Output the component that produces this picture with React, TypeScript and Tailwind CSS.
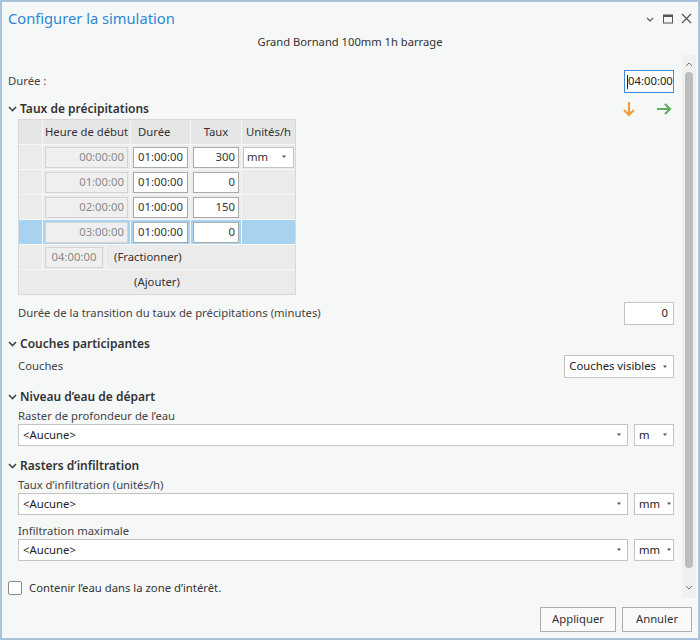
import { useState } from 'react';

const font = { fontFamily: '"Noto Sans", "Open Sans", sans-serif' };

const rows = [
  { start: '00:00:00', dur: '01:00:00', rate: '300', unit: true },
  { start: '01:00:00', dur: '01:00:00', rate: '0' },
  { start: '02:00:00', dur: '01:00:00', rate: '150' },
  { start: '03:00:00', dur: '01:00:00', rate: '0', selected: true },
];

function Caret({ className = '' }: { className?: string }) {
  return (
    <svg width="6" height="4" viewBox="0 0 6 4" className={`shrink-0 ${className}`}>
      <path d="M1 0.5h4L3 3z" fill="#555" />
    </svg>
  );
}

function Chevron() {
  return (
    <svg width="9" height="6" viewBox="0 0 9 6" className="shrink-0">
      <path d="M1 1l3.5 3.5L8 1" fill="none" stroke="#444" strokeWidth="1.6" />
    </svg>
  );
}

function SectionTitle({ children }: { children: React.ReactNode }) {
  return (
    <div className="flex items-center gap-[3px] h-[18px] text-[12px] font-semibold text-[#333] whitespace-nowrap">
      <Chevron />
      <span>{children}</span>
    </div>
  );
}

function Select({ value, className = '' }: { value: string; className?: string }) {
  return (
    <div className={`flex items-center justify-between gap-[6px] h-[22px] pl-[4px] pr-[5px] bg-white border border-[#c4c4c4] text-[#222] whitespace-nowrap ${className}`}>
      <span>{value}</span>
      <Caret />
    </div>
  );
}

function RasterRow({ unit }: { unit: string }) {
  return (
    <div className="flex gap-[6px]">
      <Select value="<Aucune>" className="flex-1" />
      <Select value={unit} className="w-[40px]" />
    </div>
  );
}

function RainTable() {
  return (
    <div className="ml-[10px] w-[278px] border border-[#d8d8d8] bg-[#ebebeb] text-[#333] whitespace-nowrap">
      <div className="flex h-[25px] border-b border-[#f7f7f7] bg-[#e6e6e6]">
        <div className="w-[24px] border-r border-[#f7f7f7]" />
        <div className="w-[88px] flex items-center justify-center border-r border-[#f7f7f7]">Heure de début</div>
        <div className="w-[60px] flex items-center pl-[7px] border-r border-[#f7f7f7]">Durée</div>
        <div className="w-[51px] flex items-center justify-center border-r border-[#f7f7f7]">Taux</div>
        <div className="flex-1 flex items-center justify-center">Unités/h</div>
      </div>
      {rows.map((r) => (
        <div
          key={r.start}
          className={`flex h-[25px] border-b border-[#f7f7f7] ${r.selected ? 'bg-[#a7d3f1]' : ''}`}
        >
          <div className="w-[24px] border-r border-[#f7f7f7]" />
          <div className="w-[88px] flex items-center px-[2px] border-r border-[#f7f7f7]">
            <div className="w-full h-[21px] flex items-center justify-end pr-[3px] bg-[#efefef] border border-[#d4d4d4] text-[#8a8a8a]">
              {r.start}
            </div>
          </div>
          <div className="w-[60px] flex items-center px-[2px] border-r border-[#f7f7f7]">
            <div className="w-full h-[21px] flex items-center justify-center bg-white border border-[#ababab]">
              {r.dur}
            </div>
          </div>
          <div className="w-[51px] flex items-center px-[2px] border-r border-[#f7f7f7]">
            <div className="w-full h-[21px] flex items-center justify-end pr-[3px] bg-white border border-[#ababab]">
              {r.rate}
            </div>
          </div>
          <div className="flex-1 flex items-center px-[1px]">
            {r.unit && (
              <div className="w-full h-[21px] flex items-center justify-between pl-[3px] pr-[6px] bg-white border border-[#c4c4c4]">
                <span>mm</span>
                <Caret />
              </div>
            )}
          </div>
        </div>
      ))}
      <div className="flex h-[25px] border-b border-[#f7f7f7]">
        <div className="w-[24px] border-r border-[#f7f7f7]" />
        <div className="flex items-center px-[2px]">
          <div className="w-[58px] h-[21px] flex items-center justify-center bg-[#efefef] border border-[#d4d4d4] text-[#8a8a8a]">
            04:00:00
          </div>
        </div>
        <div className="flex items-center pl-[8px] border-l border-[#f7f7f7]">(Fractionner)</div>
      </div>
      <div className="flex h-[24px] items-center justify-center">(Ajouter)</div>
    </div>
  );
}

export default function App() {
  const [contain, setContain] = useState(false);

  return (
    <div style={font} className="w-[700px] h-[640px] flex flex-col bg-[#f6f7f7] border-2 border-[#a9c4dc] text-[11.3px] text-[#333] overflow-hidden">
      {/* title bar */}
      <div className="flex items-center justify-between h-[31px] pl-[6px] pr-[6px] pt-[2px]">
        <span className="text-[14.7px] text-[#2b87d3]">Configurer la simulation</span>
        <div className="flex items-center gap-[8px] text-[#555]">
          <svg width="10" height="10" viewBox="0 0 10 10">
            <path d="M2 4l3 3 3-3" fill="none" stroke="#555" strokeWidth="1.2" />
          </svg>
          <svg width="10" height="10" viewBox="0 0 10 10">
            <rect x="0.5" y="1" width="9" height="8" fill="none" stroke="#555" />
            <rect x="0.5" y="1" width="9" height="2" fill="#555" />
          </svg>
          <svg width="11" height="11" viewBox="0 0 11 11">
            <path d="M1 1l9 9M10 1l-9 9" stroke="#555" strokeWidth="1.2" />
          </svg>
        </div>
      </div>
      <div className="h-[18px] flex items-center justify-center text-[11.2px] text-[#333]">
        Grand Bornand 100mm 1h barrage
      </div>

      {/* scrolling body */}
      <div className="flex mt-[4px] h-[543px]">
        <div className="flex-1 pl-[6px] pr-[8px] pt-[15px] flex flex-col text-[#444] whitespace-nowrap">
          <div className="flex items-center justify-between h-[23px]">
            <span>Durée :</span>
            <div className="w-[50px] h-[23px] flex items-center pl-[2px] bg-white border border-[#3c8ad8] text-[#222]">
              <span className="w-[1px] h-[14px] bg-[#222]" />
              <span>04:00:00</span>
            </div>
          </div>

          <div className="flex items-center justify-between mt-[6px] h-[20px]">
            <SectionTitle>Taux de précipitations</SectionTitle>
            <div className="flex items-center gap-[20px] pr-[2px]">
              <svg width="14" height="16" viewBox="0 0 14 16">
                <path d="M7 1v13M2 9l5 5 5-5" fill="none" stroke="#f0a040" strokeWidth="2.2" />
              </svg>
              <svg width="16" height="14" viewBox="0 0 16 14">
                <path d="M1 7h13M9 2l5 5-5 5" fill="none" stroke="#5cb060" strokeWidth="2.2" />
              </svg>
            </div>
          </div>

          <RainTable />

          <div className="flex items-center justify-between mt-[7px] h-[23px] pl-[10px]">
            <span>Durée de la transition du taux de précipitations (minutes)</span>
            <div className="w-[50px] h-[23px] flex items-center justify-end pr-[5px] bg-white border border-[#c4c4c4] text-[#222]">
              0
            </div>
          </div>

          <div className="mt-[10px]">
            <SectionTitle>Couches participantes</SectionTitle>
          </div>
          <div className="flex items-center justify-between mt-[2px] h-[23px] pl-[10px]">
            <span>Couches</span>
            <Select value="Couches visibles" className="h-[23px]" />
          </div>

          <div className="mt-[10px]">
            <SectionTitle>Niveau d’eau de départ</SectionTitle>
          </div>
          <div className="pl-[10px] mt-[2px]">
            <div className="h-[16px] flex items-center">Raster de profondeur de l’eau</div>
            <RasterRow unit="m" />
          </div>

          <div className="mt-[11px]">
            <SectionTitle>Rasters d’infiltration</SectionTitle>
          </div>
          <div className="pl-[10px] mt-[2px]">
            <div className="h-[16px] flex items-center">Taux d’infiltration (unités/h)</div>
            <RasterRow unit="mm" />
            <div className="h-[16px] flex items-center mt-[8px]">Infiltration maximale</div>
            <RasterRow unit="mm" />
          </div>

          <label className="flex items-center gap-[7px] mt-[19px] h-[16px] cursor-pointer">
            <input
              type="checkbox"
              checked={contain}
              onChange={() => setContain(!contain)}
              className="appearance-none w-[14px] h-[14px] bg-white border border-[#8a8a8a] rounded-[2px] checked:bg-[#2b87d3]"
            />
            <span className="text-[#333]">Contenir l’eau dans la zone d’intérêt.</span>
          </label>
        </div>

        {/* scrollbar */}
        <div className="w-[14px] mr-[2px] bg-[#f0f0f0] flex flex-col items-center">
          <svg width="8" height="6" viewBox="0 0 8 6" className="mt-[6px]">
            <path d="M1 5l3-3 3 3" fill="none" stroke="#777" strokeWidth="1" />
          </svg>
          <div className="w-[8px] mt-[5px] h-[496px] rounded-full bg-[#bdbdbd]" />
          <svg width="8" height="6" viewBox="0 0 8 6" className="mt-[17px]">
            <path d="M1 1l3 3 3-3" fill="none" stroke="#777" strokeWidth="1" />
          </svg>
        </div>
      </div>

      {/* footer */}
      <div className="flex justify-end gap-[6px] pr-[6px] pt-[9px]">
        <button className="w-[76px] h-[25px] bg-[#fafafa] border border-[#adadad] text-[#333]">Appliquer</button>
        <button className="w-[70px] h-[25px] bg-[#fafafa] border border-[#adadad] text-[#333]">Annuler</button>
      </div>
    </div>
  );
}
